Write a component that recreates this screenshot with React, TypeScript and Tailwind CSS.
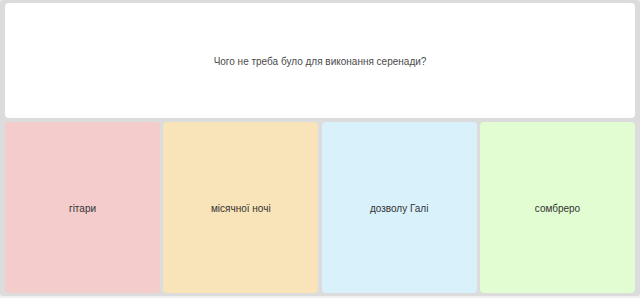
export default function App() {
  const items = [
    { t: "гітари", c: "bg-[#f4cccc]" },
    { t: "місячної ночі", c: "bg-[#f9e3b9]" },
    { t: "дозволу Галі", c: "bg-[#d9f1fb]" },
    { t: "сомбреро", c: "bg-[#e2fdd1]" },
  ];
  return (
    <div className="w-[640px] h-[298px] bg-[#f0f0f0]" style={{ fontFamily: '"Liberation Sans", Arial, sans-serif' }}>
      <div className="h-[296px] bg-[#dcdcdc] rounded-[3px] pt-[3px] pb-[3px] pl-[5px] pr-[5px] flex flex-col gap-[4px]">
        <div className="h-[115px] bg-white rounded-[4px] flex items-center justify-center pt-[2px] text-[10px] text-[#4a4a4a]">
          Чого не треба було для виконання серенади?
        </div>
        <div className="flex-1 grid grid-cols-4 gap-[3.3px]">
          {items.map((i) => (
            <div key={i.t} className={`${i.c} rounded-[4px] flex items-center justify-center pt-[1px] text-[10px] text-[#333]`}>
              {i.t}
            </div>
          ))}
        </div>
      </div>
    </div>
  );
}
